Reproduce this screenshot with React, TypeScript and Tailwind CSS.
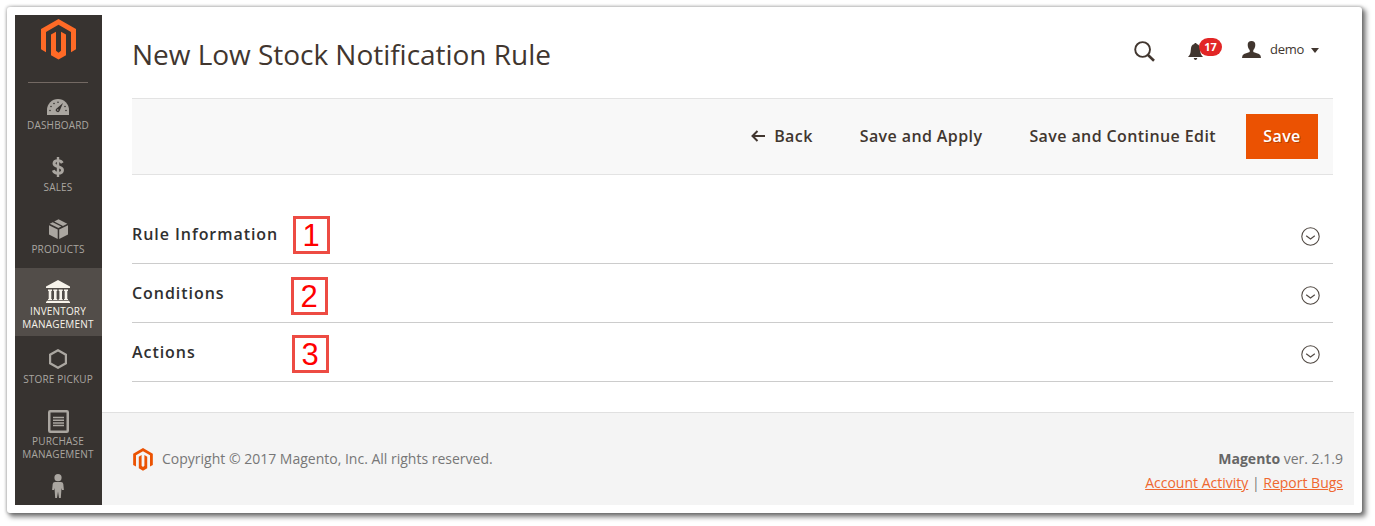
import React from 'react';

type IconProps = { className?: string };

const LogoMark = ({ className }: IconProps) => (
  <svg className={className} viewBox="0 0 35 41" fill="currentColor">
    <path d="M17.5 0 35 10.1V30.3L30 33.2V13L17.5 5.8 5 13V33.2L0 30.3V10.1Z" />
    <path d="M10 15.500 15 12.700V31.800L17.500 33.700 20 31.800V12.700L25 15.500V36.200L17.500 40.500 10 36.200Z" />
  </svg>
);

const DashboardIcon = () => (
  <svg className="h-4 w-[22px]" viewBox="0 0 22 16">
    <path fill="currentColor" d="M0 16V11A11 11 0 0 1 22 11V16Z" />
    <g fill="#373330">
      <circle cx="3" cy="11.500" r=".8" /><circle cx="4" cy="7.500" r=".8" />
      <circle cx="7" cy="4.500" r=".8" /><circle cx="11" cy="3.200" r=".8" />
      <circle cx="18" cy="7.500" r=".8" /><circle cx="19" cy="11.500" r=".8" />
      <path d="M16 4 9.300 9.700A2 2 0 1 0 12.700 11.700Z" />
    </g>
    <circle cx="10.800" cy="11" r=".8" fill="currentColor" />
  </svg>
);

const SalesIcon = () => (
  <svg className="h-5 w-3" viewBox="0 0 12 20" fill="none" stroke="currentColor">
    <path strokeWidth="2.900" d="M10.300 6C9.500 4.400 8 3.600 6 3.600 3.600 3.600 2 4.700 2 6.500 2 10.400 10.500 8.800 10.500 13 10.500 15 8.600 16.300 6 16.300 3.700 16.300 2 15.300 1.300 13.300" />
    <path strokeWidth="2.400" d="M6 0V20" />
  </svg>
);

const ProductsIcon = () => (
  <svg className="h-5 w-[19px]" viewBox="0 0 19 20" fill="currentColor">
    <path d="M0 6.200 8.700 10.400V20L0 15.500ZM19 6.200 10.200 10.400V20L19 15.500Z" />
    <path d="M.7 4.700 3.700 3.200 12.200 7.500 9.400 9ZM5.200 2.500 9.500.2 18.300 4.700 14 6.900Z" />
  </svg>
);

const BankIcon = () => (
  <svg className="h-[23px] w-6" viewBox="0 0 24 23" fill="currentColor">
    <path d="M12 0 24 6.500V8H0V6.500ZM2 9.500H6V11H5.300V19H6V20H2V19H2.700V11H2ZM7.300 9.500H11.300V11H10.600V19H11.300V20H7.300V19H8V11H7.300ZM12.700 9.500H16.700V11H16V19H16.700V20H12.700V19H13.400V11H12.700ZM18 9.500H22V11H21.300V19H22V20H18V19H18.700V11H18ZM1 20.700H23V21.500H24V23H0V21.500H1Z" />
  </svg>
);

const HexIcon = () => (
  <svg className="h-5 w-[18px]" viewBox="0 0 18 20" fill="none" stroke="currentColor" strokeWidth="2.200">
    <path d="M9 1.200 16.900 5.700V14.300L9 18.800 1.100 14.300V5.700Z" />
  </svg>
);

const ListIcon = () => (
  <svg className="h-[23px] w-[21px]" viewBox="0 0 21 23" fill="none" stroke="currentColor">
    <rect x="1.250" y="1.250" width="18.500" height="20.500" rx="1" strokeWidth="2.500" />
    <path strokeWidth="1.500" d="M5 7.500H16M5 10.200H16M5 12.900H16M5 15.600H16" />
  </svg>
);

const PersonIcon = () => (
  <svg className="h-6 w-3" viewBox="0 0 12 24" fill="currentColor">
    <circle cx="6" cy="3.700" r="3.600" />
    <path d="M3 8H9Q11 8 11.300 10L11.900 16H10L9.500 14 8.800 24H7L6 17.500 5 24H3.200L2.500 14 2 16H.1L.7 10Q1 8 3 8Z" />
  </svg>
);

const BellIcon = () => (
  <svg className="h-[17px] w-[15px]" viewBox="0 0 15 17" fill="currentColor">
    <path d="M7.500 0C8.200 0 8.700.5 8.700 1.100 11.400 1.700 12 4 12.200 7 12.400 10.500 13 12 15 14H0C2 12 2.600 10.500 2.800 7 3 4 3.600 1.700 6.300 1.100 6.300.5 6.800 0 7.500 0ZM5.700 15H9.300C9 16.300 8.400 17 7.500 17S6 16.300 5.700 15Z" />
  </svg>
);

const UserIcon = () => (
  <svg className="h-[17px] w-[19px]" viewBox="0 0 19 17" fill="currentColor">
    <path d="M9.500 0C12 0 13.400 1.500 13.300 4 13.200 6.500 12.300 8 11.300 9V11L17 13Q19 13.800 19 17H0Q0 13.800 2 13L7.700 11V9C6.700 8 5.800 6.500 5.700 4 5.600 1.500 7 0 9.500 0Z" />
  </svg>
);

const menu = [
  { lines: ['Dashboard'], icon: <DashboardIcon />, offset: 'pt-[17px]' },
  { lines: ['Sales'], icon: <SalesIcon />, offset: 'pt-[13px]' },
  { lines: ['Products'], icon: <ProductsIcon />, offset: 'pt-[13px]' },
  { lines: ['Inventory', 'Management'], icon: <BankIcon />, offset: 'pt-[12px]', active: true },
  { lines: ['Store Pickup'], icon: <HexIcon />, offset: 'pt-[13px]' },
  { lines: ['Purchase', 'Management'], icon: <ListIcon />, offset: 'pt-[12px]' },
  { lines: [], icon: <PersonIcon />, offset: 'pt-[14px]' },
];

const sections = [
  { title: 'Rule Information', number: 1, marker: 'left-[161px] top-[11px]' },
  { title: 'Conditions', number: 2, marker: 'left-[159px] top-[13px]' },
  { title: 'Actions', number: 3, marker: 'left-[160px] top-[12px]' },
];

function Sidebar() {
  return (
    <nav className="flex w-[87px] shrink-0 flex-col items-center overflow-hidden bg-[#373330] text-[#aaa6a0]">
      <div className="mr-px flex h-[68px] w-[60px] shrink-0 justify-center border-b border-[#736963] pt-[4px]">
        <LogoMark className="ml-px h-[41px] w-[35px] shrink-0 text-[#ff6a26]" />
      </div>
      {menu.map((item, i) => (
        <a
          key={i}
          className={`flex w-full shrink-0 flex-col items-center pr-px ${item.active ? 'h-[68px] bg-[#524d49] text-[#f7f3eb]' : 'h-[62px]'} ${i === 0 ? '-mt-px' : ''}`}
        >
          <span className={`flex h-[37px] shrink-0 justify-center ${item.offset}`}>
            {item.icon}
          </span>
          <span className="text-center text-[10px] leading-[13px] tracking-[0.17px] uppercase">
            {item.lines.map((line) => <span key={line} className="block whitespace-nowrap">{line}</span>)}
          </span>
        </a>
      ))}
    </nav>
  );
}

export default function App() {
  return (
    <div className="h-[526px] w-[1375px] overflow-hidden bg-white pt-[7px] pl-[7px] font-['Open_Sans',sans-serif] text-[#41362f]">
      <div className="flex h-[506px] w-[1355px] rounded-[3px] bg-white p-2 shadow-[0_0_3px_1px_rgba(0,0,0,0.2),3px_3px_5px_1px_rgba(0,0,0,0.5)]">
        <Sidebar />
        <div className="flex w-[1252px] flex-col">
          <main className="flex h-[397px] flex-col pr-[21px] pl-[30px]">
            <header className="flex h-[83px] shrink-0 justify-between">
              <h1 className="pt-[19px] text-[28px] leading-10 tracking-[-0.03px] whitespace-nowrap">New Low Stock Notification Rule</h1>
              <div className="flex pr-[14px]">
                <svg className="mt-[26px] h-[21px] w-[21px]" viewBox="0 0 21 21" fill="none" stroke="currentColor">
                  <circle cx="8.600" cy="8.500" r="7.400" strokeWidth="1.900" />
                  <path d="M14 14 20 19.700" strokeWidth="2.600" />
                </svg>
                <div className="relative mt-[28px] ml-[33px] w-[34px]">
                  <BellIcon />
                  <span className="absolute top-[-5px] left-[11px] flex h-[18px] w-[23px] items-center justify-center rounded-full bg-[#e22626] text-[11px] font-bold text-white">17</span>
                </div>
                <div className="ml-[20px] flex">
                  <span className="mt-[26px]"><UserIcon /></span>
                  <span className="mt-[25px] ml-[9px] w-[35px] text-[13px] leading-[18px] tracking-[-0.25px]">demo</span>
                  <svg className="mt-[33px] ml-[6px] h-[5px] w-2" viewBox="0 0 8 5" fill="currentColor"><path d="M0 0H8L4 5Z" /></svg>
                </div>
              </div>
            </header>
            <div className="flex h-[77px] shrink-0 items-center justify-end border-y border-[#e3e3e3] bg-[#f8f8f8] pr-[15px] text-base font-semibold tracking-[0.4px] whitespace-nowrap">
              <button className="flex items-center pb-[2px]">
                <svg className="mr-[9px] h-3 w-[14px]" viewBox="0 0 14 12" fill="none" stroke="currentColor" strokeWidth="2"><path d="M14 6H1.500M6.500 1 1.500 6 6.500 11" /></svg>
                Back
              </button>
              <button className="ml-[47px] pb-[2px]">Save and Apply</button>
              <button className="ml-[47px] pb-[2px]">Save and Continue Edit</button>
              <button className="ml-[30px] h-[45px] w-[72px] bg-[#eb5202] pb-[2px] font-semibold tracking-[0.4px] text-white [text-shadow:1px_1px_0_rgba(0,0,0,0.25)]">Save</button>
            </div>
            <div className="mt-[30px]">
              {sections.map((section) => (
                <section key={section.number} className="relative flex h-[59px] justify-between border-b border-[#cccccc] pr-[13px]">
                  <h2 className="pt-[17px] text-base leading-6 font-semibold tracking-[0.950px] text-[#303030]">{section.title}</h2>
                  <span className={`absolute flex h-[38px] w-[37px] items-center justify-center border-3 border-[#ed4b43] bg-white pr-px font-['Liberation_Sans',sans-serif] text-[31px] leading-none text-[#ff0000] ${section.marker}`}>
                    {section.number}
                  </span>
                  <svg className="mt-[22px] h-[19px] w-[19px]" viewBox="0 0 19 19" fill="none" stroke="#514943">
                    <circle cx="9.500" cy="9.500" r="8.700" strokeWidth="1.100" />
                    <path d="M5.200 8.800 9.500 12 13.800 8.800" strokeWidth="1.200" />
                  </svg>
                </section>
              ))}
            </div>
          </main>
          <footer className="flex flex-1 justify-between border-t border-[#e0e0e0] bg-[#f4f4f4] pr-[11px] pl-[31px] text-sm leading-6 text-[#777777]">
            <div className="flex pt-[34px]">
              <LogoMark className="mt-px mr-[9px] h-[23px] w-5 text-[#eb5202]" />
              <p>Copyright © 2017 Magento, Inc. All rights reserved.</p>
            </div>
            <div className="pt-[34px] text-right">
              <p><strong className="text-[#666666]">Magento</strong> ver. 2.1.9</p>
              <p><a className="text-[#ef672f] underline">Account Activity</a> | <a className="text-[#ef672f] underline">Report Bugs</a></p>
            </div>
          </footer>
        </div>
      </div>
    </div>
  );
}
